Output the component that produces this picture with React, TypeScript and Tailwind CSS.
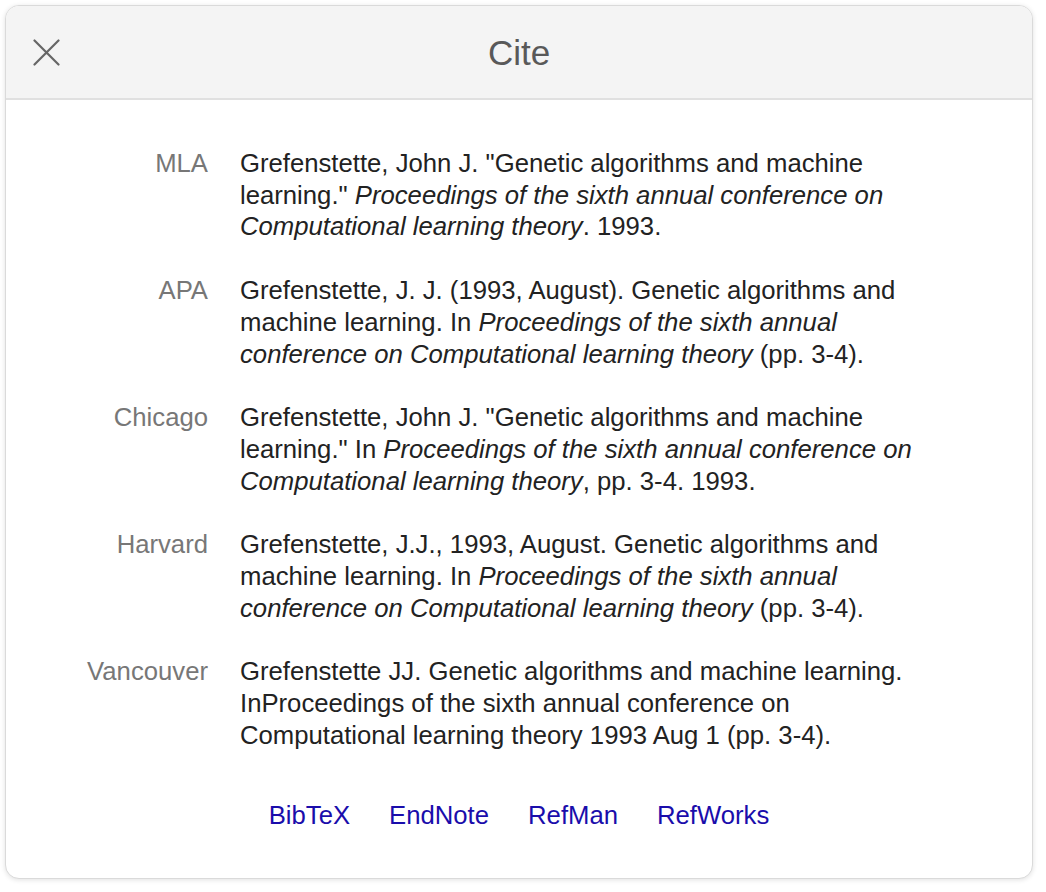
const styles = [
  {
    label: "MLA",
    text: (
      <>
        Grefenstette, John J. "Genetic algorithms and machine learning."{" "}
        <i>Proceedings of the sixth annual conference on Computational learning theory</i>. 1993.
      </>
    ),
  },
  {
    label: "APA",
    text: (
      <>
        Grefenstette, J. J. (1993, August). Genetic algorithms and machine learning. In{" "}
        <i>Proceedings of the sixth annual conference on Computational learning theory</i> (pp. 3-4).
      </>
    ),
  },
  {
    label: "Chicago",
    text: (
      <>
        Grefenstette, John J. "Genetic algorithms and machine learning." In{" "}
        <i>Proceedings of the sixth annual conference on Computational learning theory</i>, pp. 3-4. 1993.
      </>
    ),
  },
  {
    label: "Harvard",
    text: (
      <>
        Grefenstette, J.J., 1993, August. Genetic algorithms and machine learning. In{" "}
        <i>Proceedings of the sixth annual conference on Computational learning theory</i> (pp. 3-4).
      </>
    ),
  },
  {
    label: "Vancouver",
    text: (
      <>
        Grefenstette JJ. Genetic algorithms and machine learning. InProceedings of the sixth annual
        conference on Computational learning theory 1993 Aug 1 (pp. 3-4).
      </>
    ),
  },
];

const exports = ["BibTeX", "EndNote", "RefMan", "RefWorks"];

export default function App() {
  return (
    <div className="min-h-[892px] bg-white pt-[5px] pl-[5px] font-['Liberation_Sans',Arial,sans-serif]">
      <div className="w-[1028px] h-[874px] rounded-[14px] border border-[#dadada] bg-white shadow-[0_1px_5px_rgba(0,0,0,0.12)] overflow-hidden">
        <div className="relative h-[94px] bg-[#f4f4f4] border-b-2 border-[#e0e0e0] flex items-center justify-center">
          <button className="absolute left-[27px] top-[33px] text-[#666]">
            <svg width="27" height="27" viewBox="0 0 27 27" fill="none" stroke="currentColor" strokeWidth="2.2" strokeLinecap="round">
              <path d="M1.5 1.5 L25.5 25.5 M25.5 1.5 L1.5 25.5" />
            </svg>
          </button>
          <h1 className="text-[35px] text-[#595959] leading-none">Cite</h1>
        </div>
        <div className="pt-[48px]">
          <div className="flex flex-col gap-[32px]">
            {styles.map((s) => (
              <div key={s.label} className="flex gap-[32px] text-[25.7px] leading-[31.7px]">
                <div className="w-[202px] shrink-0 text-right text-[#777]">{s.label}</div>
                <div className="w-[700px] text-[#222]">{s.text}</div>
              </div>
            ))}
          </div>
          <div className="mt-[47px] flex justify-center gap-[39px] text-[25.7px] leading-[32px]">
            {exports.map((e) => (
              <a key={e} href="#" className="text-[#1a0dab]">
                {e}
              </a>
            ))}
          </div>
        </div>
      </div>
    </div>
  );
}
